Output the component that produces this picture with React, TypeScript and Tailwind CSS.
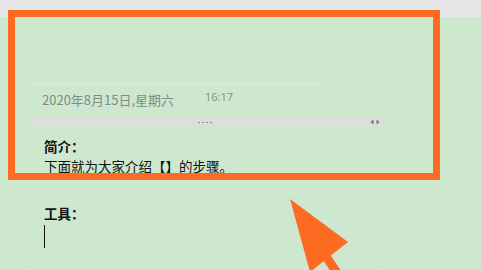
import React from "react";

const cjk = { fontFamily: '"Noto Sans CJK SC", "Noto Sans", sans-serif' };

export default function App() {
  return (
    <div className="relative w-[481px] h-[270px] overflow-hidden bg-[#cde8cf]" style={cjk}>
      <div className="h-[17px] bg-[#e6e6e6]" />
      <div className="mt-[67px] ml-[32px] w-[288px] h-px bg-[#d7eed9]" />
      <div className="flex items-start ml-[42px] mt-[6px] h-[27px]">
        <span className="w-[163px] text-[13px] leading-[16px] mt-[1px] text-[#7f8c82] whitespace-nowrap">2020年8月15日,星期六</span>
        <span className="mt-[-2px] text-[11px] leading-[16px] text-[#7f8c82]" style={{ fontFamily: '"Open Sans", sans-serif' }}>16:17</span>
      </div>
      <div className="ml-[30px] w-[351px] h-[8px] bg-[#dedede] relative">
        <div className="absolute left-[168px] top-[4px] flex gap-[2px]">
          <span className="w-[2px] h-px bg-[#8a8a8a]" />
          <span className="w-[2px] h-px bg-[#8a8a8a]" />
          <span className="w-[2px] h-px bg-[#8a8a8a]" />
          <span className="w-[2px] h-px bg-[#8a8a8a]" />
        </div>
        <svg className="absolute left-[340px] top-[1px]" width="10" height="6" viewBox="0 0 10 6">
          <polygon points="3.5,0.5 3.5,5.5 0.5,3" fill="#777" />
          <polygon points="6.5,0.5 6.5,5.5 9.5,3" fill="#777" />
        </svg>
      </div>
      <div className="ml-[30px] w-[351px] h-[150px] border-x border-[#d3ebd5] pl-[13px] pt-[11px] text-[13.5px] text-[#111]">
        <div className="font-bold leading-[18px]">简介：</div>
        <div className="mt-[2px] leading-[18px]">下面就为大家介绍【】的步骤。</div>
        <div className="mt-[29px] font-bold leading-[18px]">工具：</div>
        <div className="mt-[3px] w-px h-[23px] bg-[#111]" />
      </div>
      <div className="absolute left-[8px] top-[10px] w-[432px] h-[170px] border-[7px] border-[#fc6b21]" />
      <svg className="absolute left-0 top-0" width="481" height="270" viewBox="0 0 481 270">
        <polygon points="290,199 348,242 310,272" fill="#fc6b21" />
        <line x1="325" y1="255" x2="350" y2="292" stroke="#fc6b21" strokeWidth="9" />
      </svg>
    </div>
  );
}
